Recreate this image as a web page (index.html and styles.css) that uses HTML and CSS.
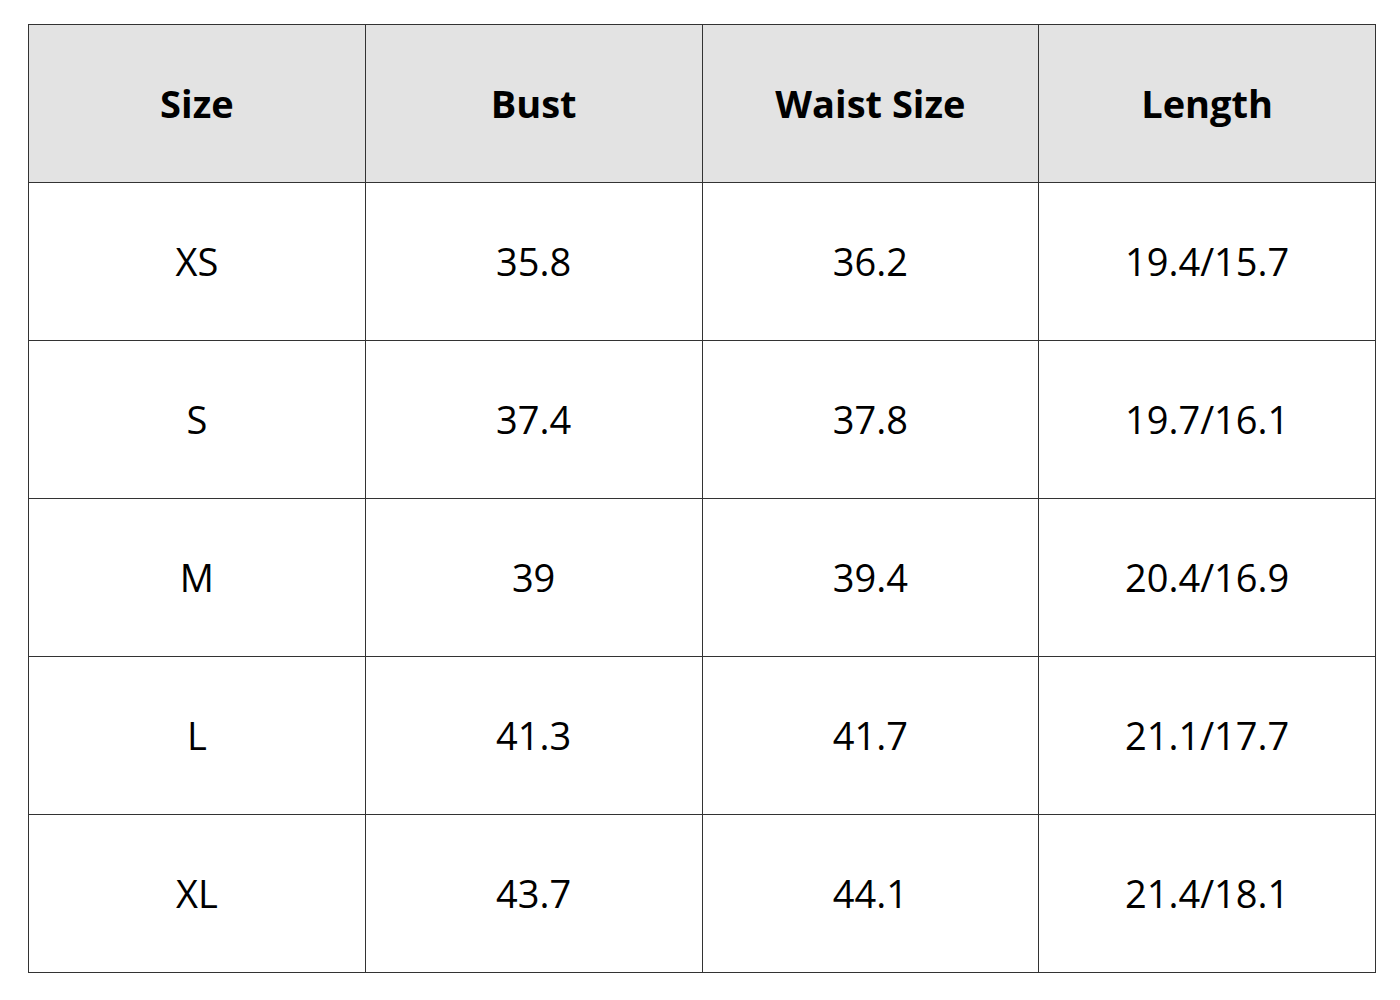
FILE: index.html
```html
<!DOCTYPE html>
<html>
<head>
<meta charset="utf-8">
<link rel="stylesheet" href="styles.css">
</head>
<body>
<table class="chart">
  <thead>
    <tr><th>Size</th><th>Bust</th><th>Waist Size</th><th>Length</th></tr>
  </thead>
  <tbody>
    <tr><td>XS</td><td>35.8</td><td>36.2</td><td>19.4/15.7</td></tr>
    <tr><td>S</td><td>37.4</td><td>37.8</td><td>19.7/16.1</td></tr>
    <tr><td>M</td><td>39</td><td>39.4</td><td>20.4/16.9</td></tr>
    <tr><td>L</td><td>41.3</td><td>41.7</td><td>21.1/17.7</td></tr>
    <tr><td>XL</td><td>43.7</td><td>44.1</td><td>21.4/18.1</td></tr>
  </tbody>
</table>
</body>
</html>
```
FILE: styles.css
```css
html, body {
  margin: 0;
  background: #ffffff;
}
body {
  padding: 24px 0 0 28px;
  font-family: "Open Sans", "Liberation Sans", sans-serif;
  color: #000;
}
.chart {
  border-collapse: collapse;
  width: 1348px;
  table-layout: fixed;
}
.chart th,
.chart td {
  border: 1px solid #333;
  height: 155px;
  padding: 0 0 2px 0;
  text-align: center;
  vertical-align: middle;
  font-size: 38px;
  line-height: 1;
}
.chart th {
  background: #e3e3e3;
  font-weight: 700;
}
.chart td {
  font-weight: 400;
}
```
